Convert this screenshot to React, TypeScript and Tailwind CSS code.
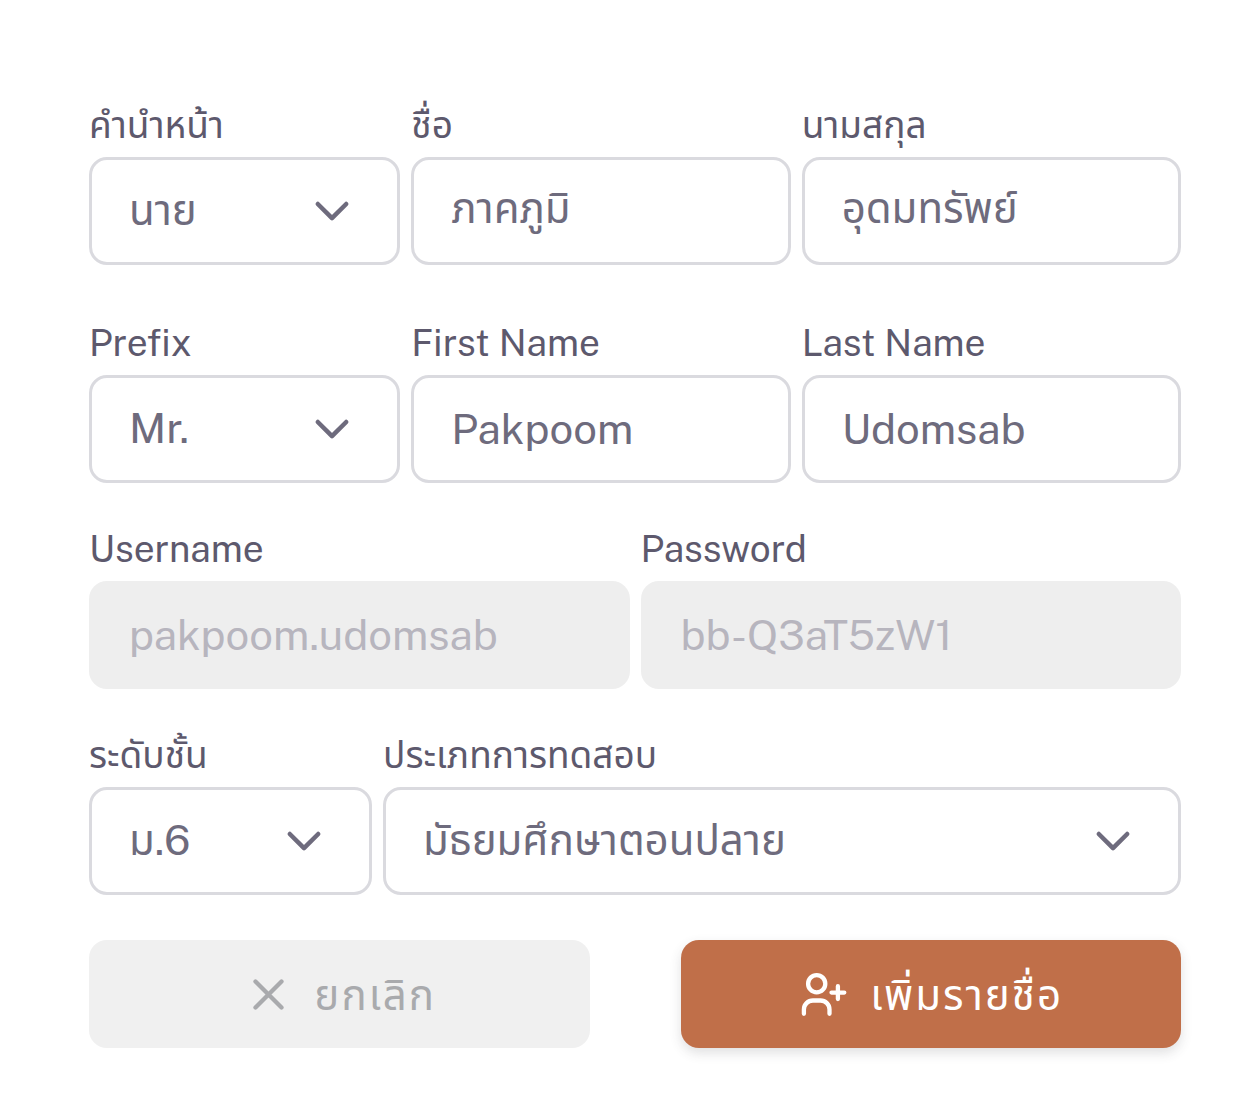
import { useState } from "react";
import type { ReactNode } from "react";

interface FieldProps {
  id: string;
  label: string;
  className?: string;
  children: ReactNode;
}

const controlClass =
  "block w-full h-[108px] rounded-[18px] border-3 border-[#dadadf] bg-white px-[37px] pb-0.5 text-[42px] leading-[72px] text-[#6e6b7d] outline-none";

function Field({ id, label, className, children }: FieldProps) {
  return (
    <div className={className}>
      <label htmlFor={id} className="block h-[56px] text-[37px] leading-[48px] text-[#5d596d] whitespace-nowrap">
        {label}
      </label>
      {children}
    </div>
  );
}

function TextField({ id, label, value, className }: { id: string; label: string; value: string; className?: string }) {
  const [text, setText] = useState(value);
  return (
    <Field id={id} label={label} className={className}>
      <input id={id} type="text" value={text} onChange={e => setText(e.target.value)} className={controlClass} />
    </Field>
  );
}

function LockedField({ id, label, value }: { id: string; label: string; value: string }) {
  return (
    <Field id={id} label={label}>
      <input
        id={id}
        type="text"
        value={value}
        disabled
        className="block w-full h-[108px] rounded-[18px] bg-[#eeeeee] px-[40px] pb-0.5 text-[42px] leading-[72px] text-[#b7b5be]"
      />
    </Field>
  );
}

function SelectField({ id, label, options, className }: { id: string; label: string; options: string[]; className?: string }) {
  return (
    <Field id={id} label={label} className={className}>
      <div className="relative">
        <select id={id} defaultValue={options[0]} className={`${controlClass} appearance-none`}>
          {options.map(option => (
            <option key={option}>{option}</option>
          ))}
        </select>
        <svg
          viewBox="0 0 36 22"
          fill="none"
          stroke="#6e6b7d"
          strokeWidth="4.5"
          strokeLinecap="round"
          strokeLinejoin="round"
          className="pointer-events-none absolute right-[50px] top-[43px] h-[22px] w-[36px]"
        >
          <path d="M3.8 4L18 18.2 32.2 4" />
        </svg>
      </div>
    </Field>
  );
}

export default function App() {
  return (
    <form
      className="bg-white pr-[68px] pl-[89px] pt-[101px] pb-[52px] font-['Public_Sans','Inter','Noto_Sans_Thai','Noto_Sans',sans-serif]"
      onSubmit={e => e.preventDefault()}
    >
      <div className="grid grid-cols-[311fr_379fr_379fr] gap-x-[11px]">
        <SelectField id="prefix-th" label="คำนำหน้า" options={["นาย", "นาง", "นางสาว"]} />
        <TextField id="first-th" label="ชื่อ" value="ภาคภูมิ" />
        <TextField id="last-th" label="นามสกุล" value="อุดมทรัพย์" />
      </div>
      <div className="mt-[54px] grid grid-cols-[311fr_379fr_379fr] gap-x-[11px]">
        <SelectField id="prefix-en" label="Prefix" options={["Mr.", "Mrs.", "Ms."]} />
        <TextField id="first-en" label="First Name" value="Pakpoom" />
        <TextField id="last-en" label="Last Name" value="Udomsab" />
      </div>
      <div className="mt-[42px] grid grid-cols-2 gap-x-[11px]">
        <LockedField id="username" label="Username" value="pakpoom.udomsab" />
        <LockedField id="password" label="Password" value="bb-Q3aT5zW1" />
      </div>
      <div className="mt-[42px] grid grid-cols-[283fr_798fr] gap-x-[11px]">
        <SelectField id="grade" label="ระดับชั้น" options={["ม.6", "ม.5", "ม.4"]} />
        <SelectField id="exam" label="ประเภทการทดสอบ" options={["มัธยมศึกษาตอนปลาย", "มัธยมศึกษาตอนต้น"]} />
      </div>
      <div className="mt-[45px] grid grid-cols-2 gap-x-[91px]">
        <button type="button" className="flex h-[108px] items-center justify-center gap-5 rounded-[18px] bg-[#f0f0f0] text-[42px] tracking-wider text-[#a9aaad]">
          <svg viewBox="0 0 52 52" fill="none" stroke="currentColor" strokeWidth="4.3" strokeLinecap="round" className="size-[52px]">
            <path d="M13.5 13.5l26 26M39.5 13.5l-26 26" />
          </svg>
          ยกเลิก
        </button>
        <button
          type="submit"
          className="flex h-[108px] items-center justify-center gap-5 rounded-[18px] bg-[#c06f49] text-[42px] tracking-wider text-white shadow-[0_5px_12px_rgba(60,60,70,0.16)]"
        >
          <svg viewBox="0 0 52 52" fill="none" stroke="currentColor" strokeWidth="4.3" strokeLinecap="round" className="size-[52px]">
            <circle cx="18.7" cy="15.7" r="8.6" />
            <path d="M5.9 45.8v-4.3a9 9 0 0 1 9-9h7.6a9 9 0 0 1 9 9v4.3M39.9 18.2v12.8M33.5 24.6h12.8" />
          </svg>
          เพิ่มรายชื่อ
        </button>
      </div>
    </form>
  );
}
